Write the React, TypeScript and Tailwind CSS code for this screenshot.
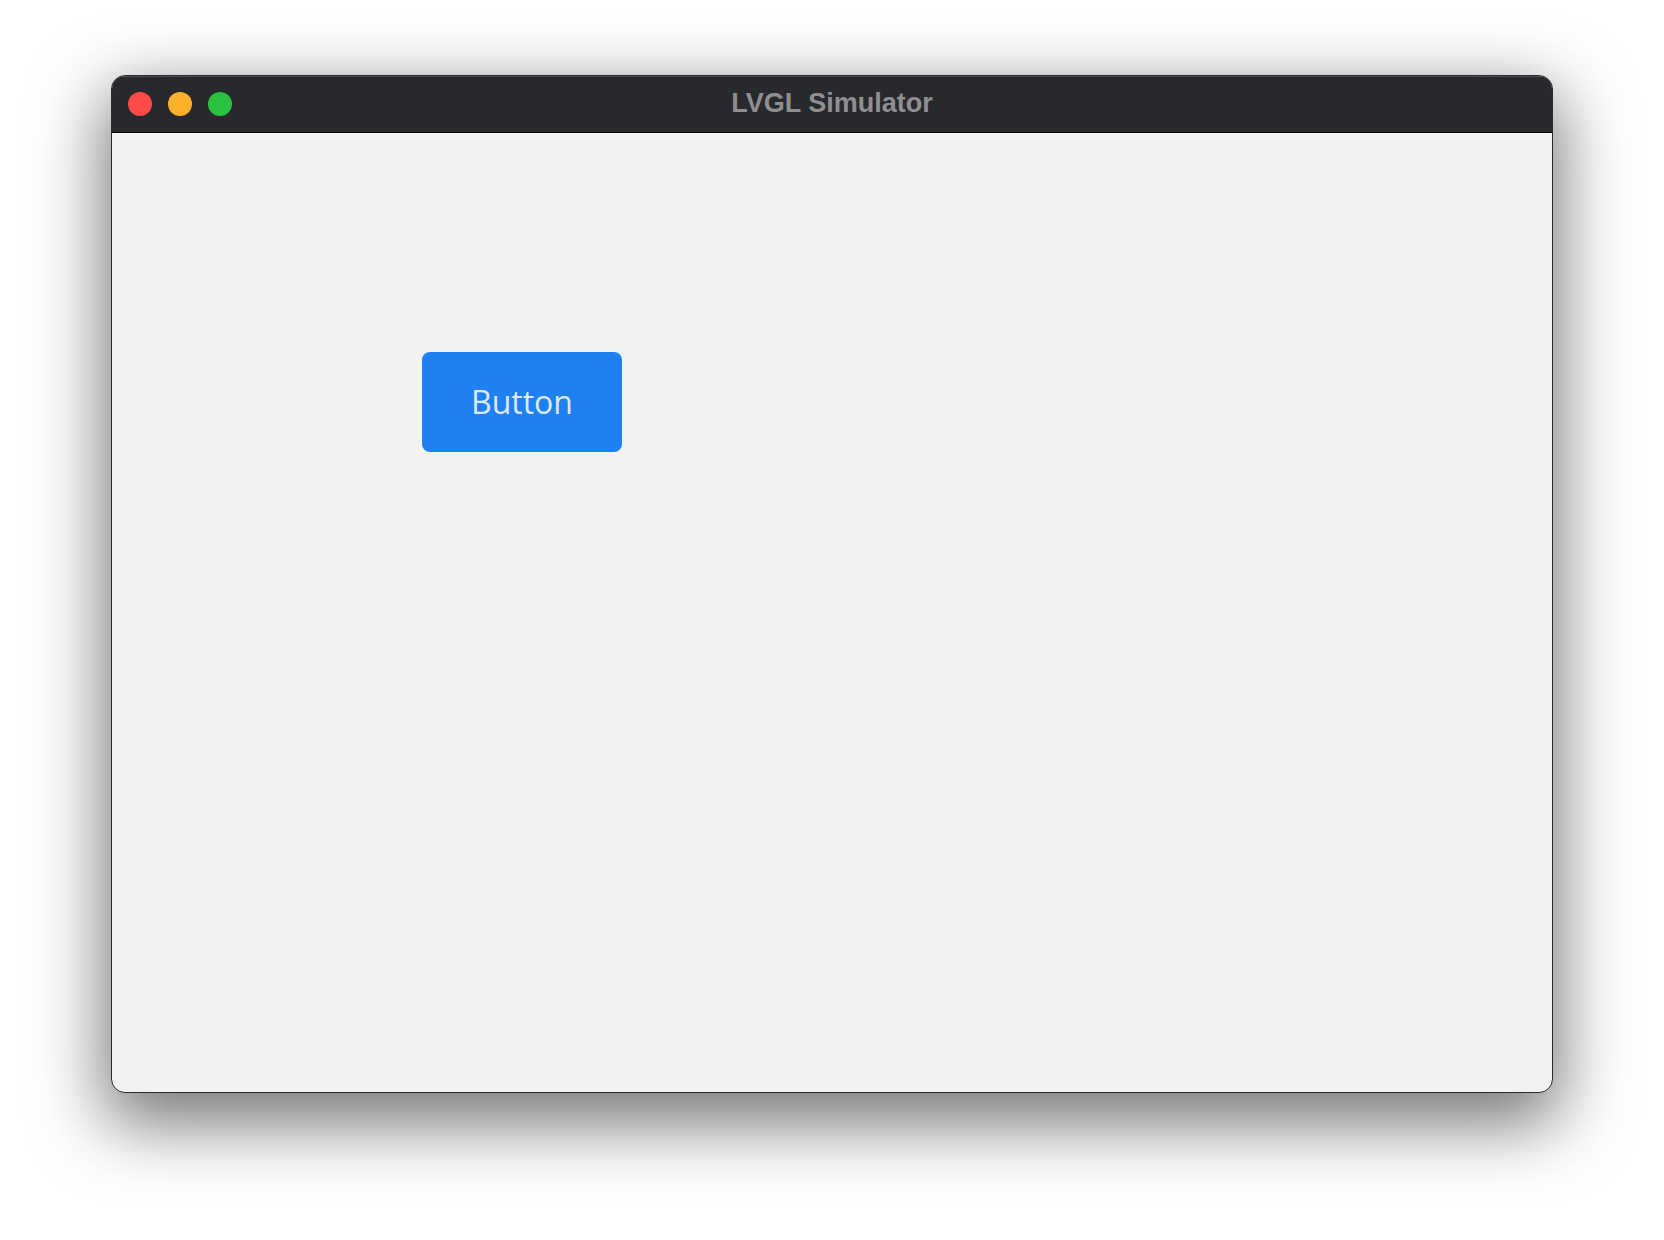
// Simulator window mock — macOS chrome around an LVGL screen
export default function App() {
  const lights = ["bg-[#fe4a48]", "bg-[#fdb12b]", "bg-[#29c33f]"];

  return (
    <div className="w-full h-[1240px] bg-white pl-[111px] pt-[75px]">
      <div className="w-[1442px] rounded-[14px] border border-[#2a2a2c] bg-[#f2f2f2] overflow-hidden shadow-[0_24px_70px_6px_rgba(0,0,0,0.55)]">
        {/* Title bar */}
        <div className="relative h-[57px] bg-[#28292c] border-b border-black flex items-center pl-[16px] gap-4 shadow-[inset_0_1px_0_rgba(255,255,255,0.18)]">
          {lights.map((c, i) => (
            <span key={i} className={`w-6 h-6 rounded-full ${c}`} />
          ))}
          <div className="absolute inset-0 flex items-center justify-center pb-[2px] pointer-events-none">
            <span className="font-['Liberation_Sans',Arial,sans-serif] font-bold text-[27px] text-[#8f8f91]">
              LVGL Simulator
            </span>
          </div>
        </div>

        {/* LVGL screen */}
        <div className="h-[959px] pl-[310px] pt-[219px]">
          <button className="w-[200px] h-[100px] rounded-[8px] bg-[#1f80f1] flex items-center justify-center">
            <span className="font-['Open_Sans','Noto_Sans',sans-serif] text-[32px] text-[#dde9f9] leading-none">
              Button
            </span>
          </button>
        </div>
      </div>
    </div>
  );
}
